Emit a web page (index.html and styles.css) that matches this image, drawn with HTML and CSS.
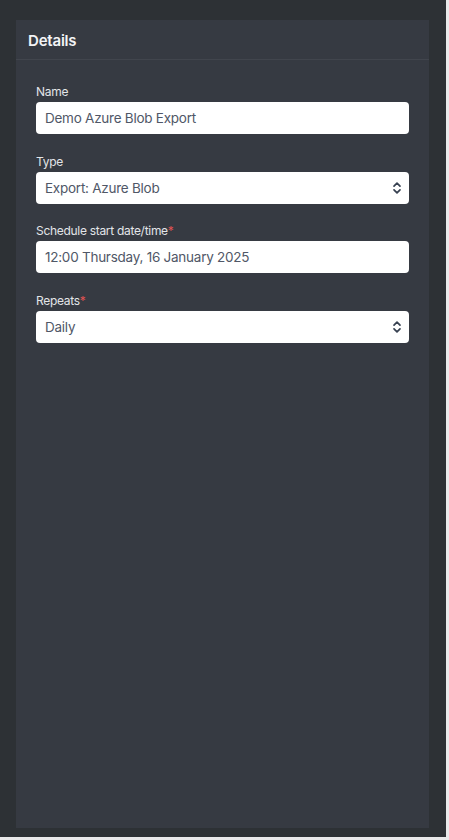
FILE: index.html
```html
<!DOCTYPE html>
<html lang="en">
<head>
<meta charset="utf-8">
<title>Details</title>
<link rel="stylesheet" href="styles.css">
</head>
<body>
<div class="app">
  <section class="panel">
    <header class="panel-header"><h2>Details</h2></header>
    <div class="panel-body">
      <div class="field">
        <label class="label">Name</label>
        <div class="input">Demo Azure Blob Export</div>
      </div>
      <div class="field">
        <label class="label">Type</label>
        <div class="input select">Export: Azure Blob
          <svg class="chev" viewBox="0 0 10 14" width="10" height="14"><path d="M2 5.2 L5 2.2 L8 5.2 M2 8.8 L5 11.8 L8 8.8" fill="none" stroke="#374151" stroke-width="1.7" stroke-linecap="round" stroke-linejoin="round"/></svg>
        </div>
      </div>
      <div class="field">
        <label class="label">Schedule start date/time<span class="req">*</span></label>
        <div class="input">12:00 Thursday, 16 January 2025</div>
      </div>
      <div class="field">
        <label class="label">Repeats<span class="req">*</span></label>
        <div class="input select">Daily
          <svg class="chev" viewBox="0 0 10 14" width="10" height="14"><path d="M2 5.2 L5 2.2 L8 5.2 M2 8.8 L5 11.8 L8 8.8" fill="none" stroke="#374151" stroke-width="1.7" stroke-linecap="round" stroke-linejoin="round"/></svg>
        </div>
      </div>
    </div>
  </section>
</div>
</body>
</html>
```
FILE: styles.css
```css
html, body {
  margin: 0;
  padding: 0;
  background: #e9e9ea;
}
body {
  font-family: Inter, "Noto Sans", "Liberation Sans", sans-serif;
}
.app {
  width: 446px;
  height: 837px;
  background: #2d3135;
  box-sizing: border-box;
  padding: 20px 17px 9px 16px;
}
.panel {
  height: 808px;
  background: #363a42;
  display: flex;
  flex-direction: column;
}
.panel-header {
  height: 40px;
  box-sizing: border-box;
  border-bottom: 1px solid #41454d;
  display: flex;
  align-items: center;
  padding: 1px 12px 0;
}
.panel-header h2 {
  margin: 0;
  color: #f3f4f6;
  font-size: 15px;
  font-weight: 600;
  letter-spacing: -0.2px;
}
.panel-body {
  padding: 22px 20px 20px;
  display: flex;
  flex-direction: column;
  gap: 17.5px;
}
.field {
  display: flex;
  flex-direction: column;
}
.label {
  color: #e3e5e8;
  font-size: 12px;
  line-height: 16px;
  padding-top: 2px;
  margin-bottom: 2px;
  letter-spacing: -0.3px;
}
.req {
  color: #e05252;
}
.input {
  height: 32px;
  box-sizing: border-box;
  background: #ffffff;
  border-radius: 4px;
  padding: 0 9px;
  display: flex;
  align-items: center;
  color: #505767;
  font-size: 13.5px;
  letter-spacing: -0.25px;
}
.select {
  justify-content: space-between;
}
.chev {
  display: block;
  margin-right: -2px;
}
```
